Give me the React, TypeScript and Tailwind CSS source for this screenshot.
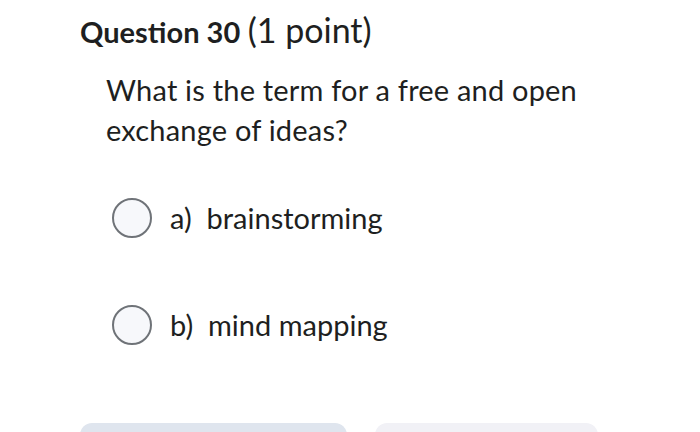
export default function App() {
  const options = [
    { id: 'a', label: 'brainstorming' },
    { id: 'b', label: 'mind mapping' },
  ]

  return (
    <div className="w-[700px] h-[432px] overflow-hidden bg-white text-[#1e1f21] font-['Lato','Liberation_Sans',sans-serif]">
      <div className="pl-[80px] pt-[10px]">
        <h2 className="text-[29px] leading-[40px]">
          <span className="font-bold">Question 30</span>{' '}
          <span className="text-[34px]">(1 point)</span>
        </h2>

        <div className="pl-[26px] pt-[18px]">
          <p className="text-[29px] leading-[40px] w-[520px] tracking-[0.2px]">
            What is the term for a free and open exchange of ideas?
          </p>

          <div className="mt-[48px] flex flex-col gap-[67px]">
            {options.map((opt) => (
              <label key={opt.id} className="flex items-center h-[40px]">
                <span className="ml-[6px] w-[40px] h-[40px] rounded-full border-2 border-[#6f7378] bg-[#f7f8fb]" />
                <span className="ml-[18px] text-[29px]">
                  {opt.id}){'\u00a0\u00a0'}{opt.label}
                </span>
              </label>
            ))}
          </div>
        </div>
      </div>

      <div className="mt-[78px] flex pl-[80px] gap-[28px]">
        <div className="w-[267px] h-[30px] rounded-[12px] bg-[#dfe5ee]" />
        <div className="w-[223px] h-[30px] rounded-[12px] bg-[#f1f1f6]" />
      </div>
    </div>
  )
}
